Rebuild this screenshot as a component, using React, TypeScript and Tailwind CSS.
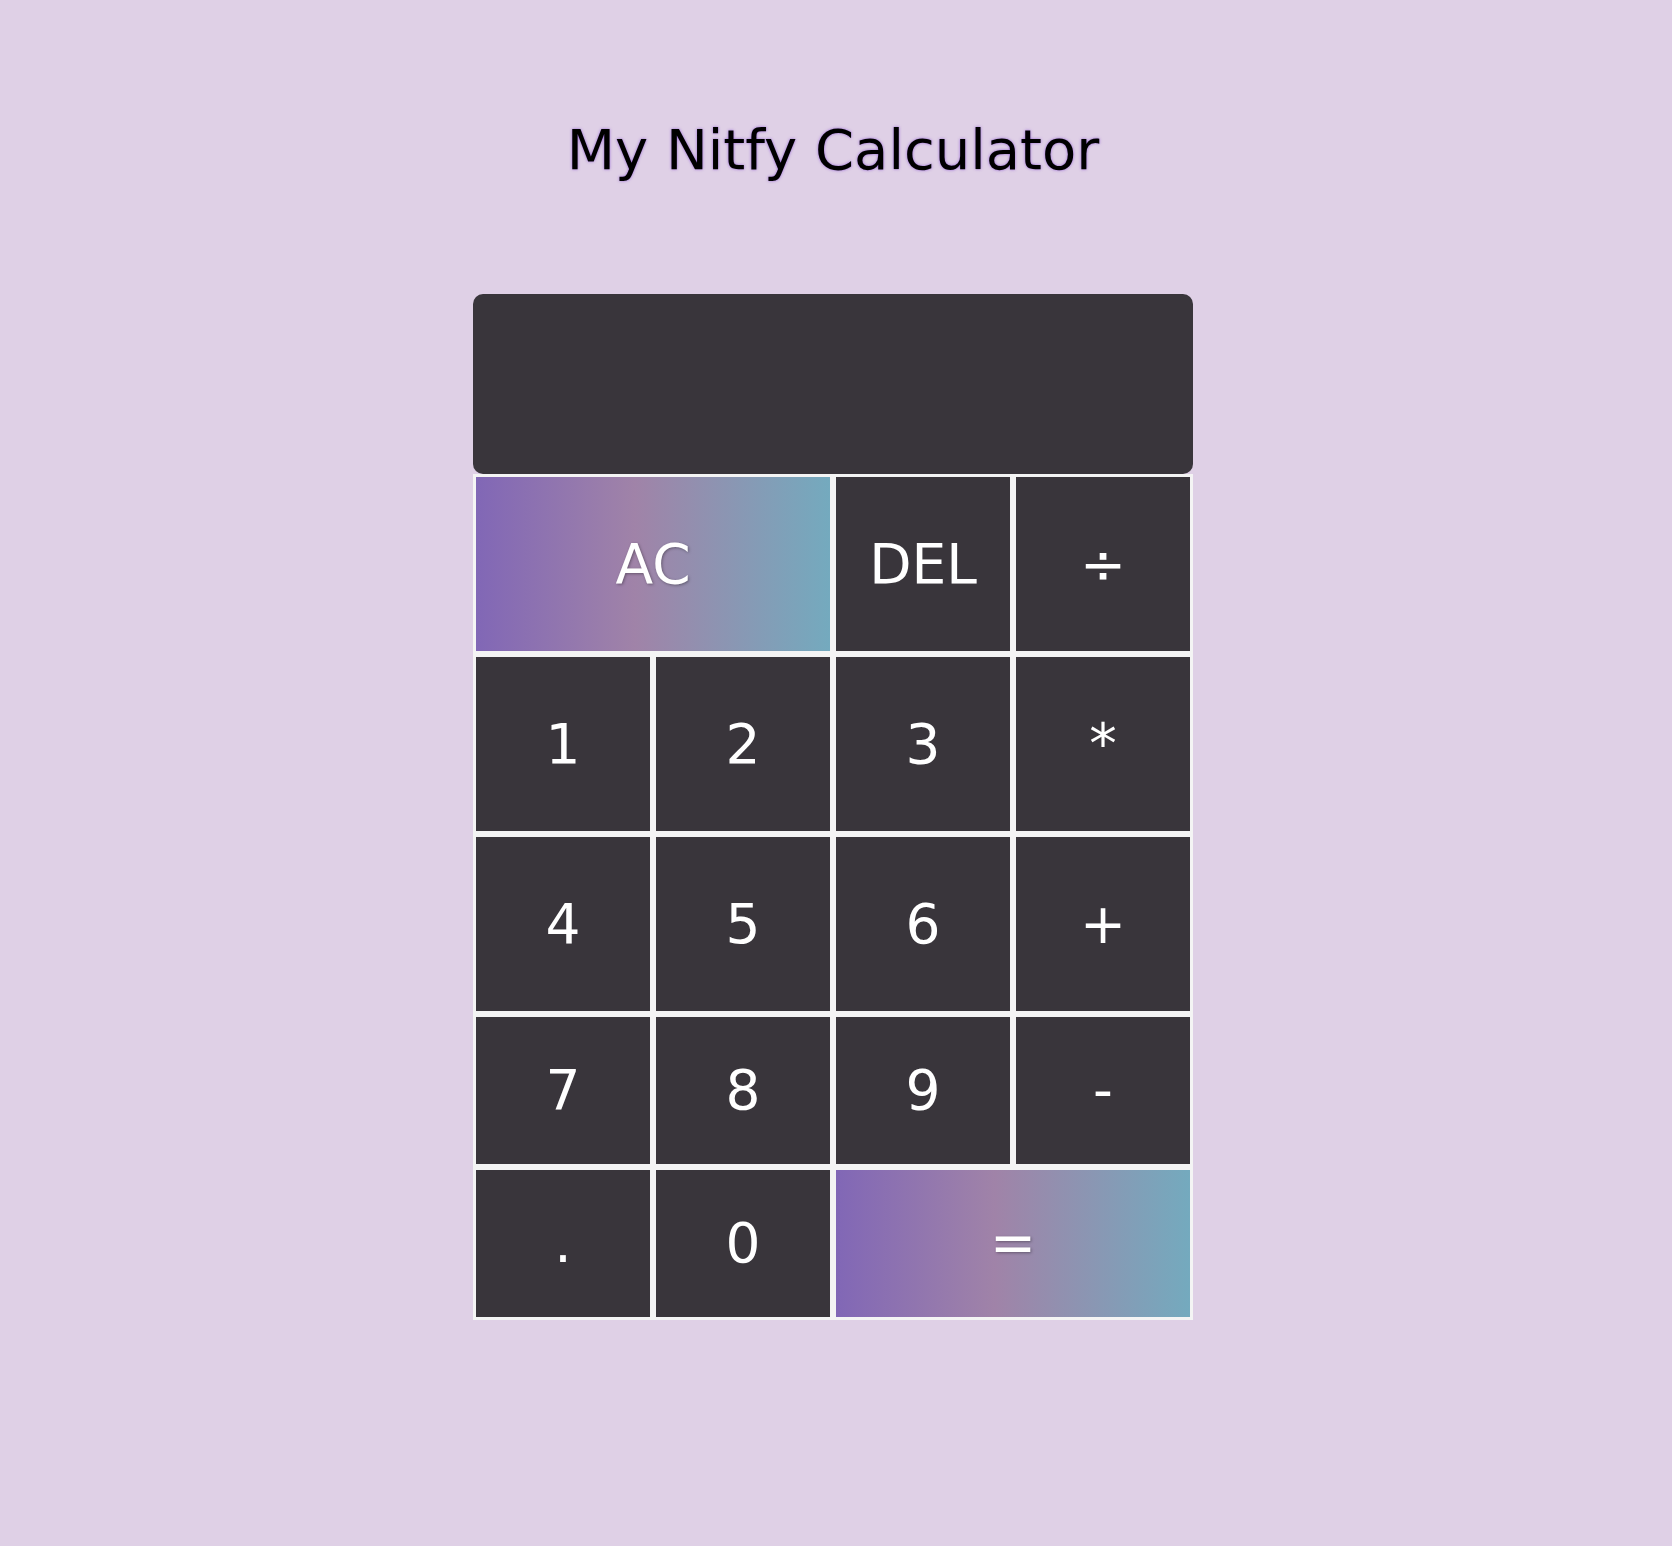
const keys: { label: string; span?: boolean; accent?: boolean }[] = [
    { label: 'AC', span: true, accent: true },
    { label: 'DEL' },
    { label: '÷' },
    { label: '1' },
    { label: '2' },
    { label: '3' },
    { label: '*' },
    { label: '4' },
    { label: '5' },
    { label: '6' },
    { label: '+' },
    { label: '7' },
    { label: '8' },
    { label: '9' },
    { label: '-' },
    { label: '.' },
    { label: '0' },
    { label: '=', span: true, accent: true },
];

export default function App() {
    return (
        <div className="min-h-[1546px] w-full bg-[#dfd0e6] flex flex-col items-center pr-[6px] font-['DejaVu_Sans',sans-serif]">
            <h1 className="mt-[122px] text-[56px] leading-none text-black [text-shadow:0_0_3px_rgba(130,70,210,0.8)]">
                My Nitfy Calculator
            </h1>

            <div className="mt-[116px] w-[720px]">
                <div className="h-[180px] rounded-[10px] bg-[#39353b]"></div>
                <div className="grid grid-cols-[repeat(4,180px)] grid-rows-[180px_180px_180px_153px_153px]">
                    {keys.map((key) => (
                        <button
                            key={key.label}
                            className={`border-[3px] border-[#f4f4f4] text-white text-[55px] leading-none flex items-center justify-center ${
                                key.span ? 'col-span-2' : ''
                            } ${
                                key.accent
                                    ? 'bg-[linear-gradient(to_right,#8167b6,#a083a8_45%,#74aabe)] [text-shadow:1px_1px_3px_rgba(0,0,0,0.35)]'
                                    : 'bg-[#39353b]'
                            }`}
                        >
                            {key.label}
                        </button>
                    ))}
                </div>
            </div>
        </div>
    );
}
